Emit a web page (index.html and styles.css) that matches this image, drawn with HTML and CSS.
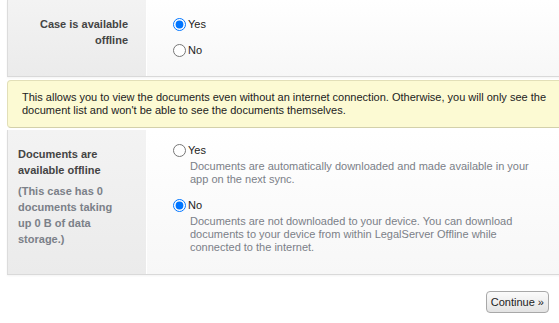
FILE: index.html
```html
<!DOCTYPE html>
<html lang="en">
<head>
  <meta charset="UTF-8">
  <title>Offline settings</title>
  <link rel="stylesheet" href="styles.css">
</head>
<body>
  <div class="page">
    <!-- Caso offline -->
    <div class="row row-case">
      <div class="label label-right">Case is available offline</div>
      <div class="value">
        <label class="option"><input type="radio" name="case" checked> Yes</label>
        <label class="option option-gap"><input type="radio" name="case"> No</label>
      </div>
    </div>

    <!-- Aviso -->
    <div class="notice">
      This allows you to view the documents even without an internet connection. Otherwise, you will only see the document list and won't be able to see the documents themselves.
    </div>

    <!-- Documentos offline -->
    <div class="row row-docs">
      <div class="label">
        <div class="label-title">Documents are available offline</div>
        <div class="label-note">(This case has 0 documents taking up 0 B of data storage.)</div>
      </div>
      <div class="value">
        <label class="option"><input type="radio" name="docs"> Yes</label>
        <p class="desc">Documents are automatically downloaded and made available in your app on the next sync.</p>
        <label class="option option-gap2"><input type="radio" name="docs" checked> No</label>
        <p class="desc">Documents are not downloaded to your device. You can download documents to your device from within LegalServer Offline while connected to the internet.</p>
      </div>
    </div>

    <div class="actions">
      <button class="button">Continue &raquo;</button>
    </div>
  </div>
</body>
</html>
```

FILE: styles.css
```css
/* Reset */
* {
  margin: 0;
  padding: 0;
  box-sizing: border-box;
}
html, body {
  height: 100%;
  overflow: hidden;
}
body {
  font-family: "Liberation Sans", Arial, sans-serif;
  font-size: 11px;
  color: #222;
  background: #fff;
}
.page {
  padding-left: 7px;
}
/* Linhas do formulário */
.row {
  display: grid;
  grid-template-columns: 139px 1fr;
  margin-right: -30px;
  border-bottom: 1px solid #d9d9d9;
  box-shadow: 0 1px 2px rgba(0, 0, 0, 0.05);
}
.label {
  border-left: 1px solid #dcdcdc;
  background: linear-gradient(#f3f3f3, #ebebeb);
  font-weight: bold;
  color: #444;
  line-height: 16px;
  padding: 16px 22px 0 10px;
}
.label-right {
  text-align: right;
  padding-right: 18px;
}
.label-note {
  color: #7b8088;
  margin-top: 5px;
}
.value {
  border-left: 1px solid #fff;
  background: linear-gradient(#ffffff, #f7f7f7);
  padding-left: 26px;
  display: flex;
  flex-direction: column;
  align-items: flex-start;
}
.row-case .value {
  padding-top: 16px;
  padding-bottom: 18px;
}
.row-docs .value {
  padding-top: 12px;
  padding-bottom: 20px;
}
.option {
  display: flex;
  align-items: center;
  height: 16px;
  font-size: 11px;
  color: #222;
}
.option input {
  width: 13px;
  height: 13px;
  margin: 0 2px 0 0;
}
.option-gap {
  margin-top: 10px;
}
.option-gap2 {
  margin-top: 11px;
}
.desc {
  margin-top: 2px;
  padding-left: 17px;
  max-width: 367px;
  line-height: 13px;
  color: #7b8088;
}
/* Caixa de aviso amarela */
.notice {
  margin: 3px -30px 2px 0;
  padding: 10px 14px 10px 14px;
  background: #fcfad3;
  border: 1px solid #e2dfb8;
  border-bottom-color: #d3d0aa;
  border-radius: 4px;
  line-height: 13px;
  color: #222;
}
/* Botão continuar */
.actions {
  display: flex;
  justify-content: flex-end;
  padding: 16px 10px 0 0;
}
.button {
  font-family: "Liberation Sans", Arial, sans-serif;
  font-size: 11px;
  color: #222;
  height: 22px;
  padding: 0 4px;
  border: 1px solid #a8a8a8;
  border-radius: 4px;
  background: linear-gradient(#fbfbfb, #e3e3e3);
  cursor: pointer;
}
```
